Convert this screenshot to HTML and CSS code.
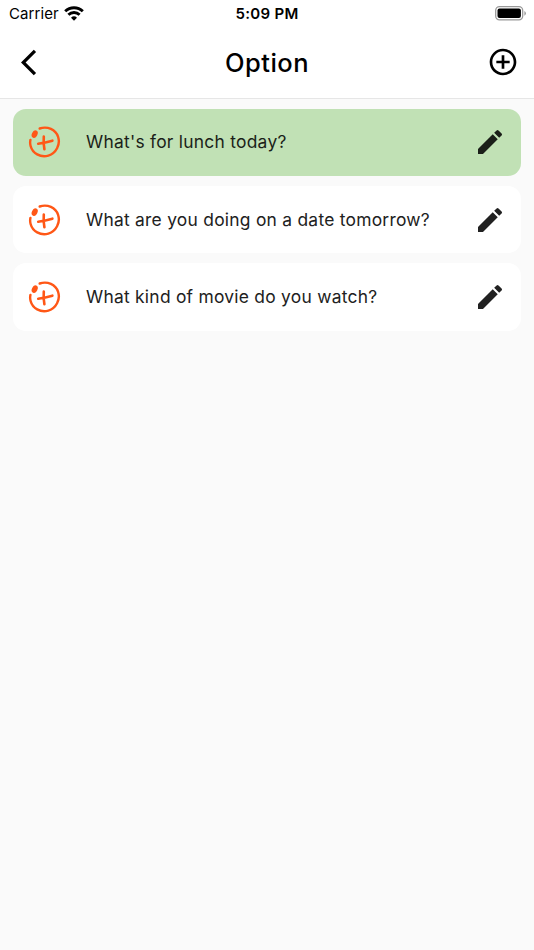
FILE: index.html
```html
<!DOCTYPE html>
<html lang="en">
<head>
<meta charset="utf-8">
<title>Option</title>
<link rel="stylesheet" href="styles.css">
</head>
<body>
<svg class="defs" aria-hidden="true">
  <symbol id="option-mark" viewBox="0 0 34 34">
    <g fill="none" stroke="currentColor" stroke-linecap="round">
      <path d="M12.7 3.5C20.5 .8 28.6 4.6 31.1 11.8C33.7 19.6 29 28.4 21.4 30.6C13.4 32.8 5.5 28.3 3.6 21C3 18.8 3 16.9 3.4 15" stroke-width="2.4"/>
      <path d="M16.8 11.6Q16.2 17.8 17.4 24.3M11.2 18.8Q18.4 17.8 25.4 15.7" stroke-width="2.6"/>
    </g>
    <ellipse cx="7.7" cy="9.1" rx="2.8" ry="3.9" transform="rotate(25 7.7 9.1)" fill="currentColor"/>
  </symbol>
  <symbol id="pencil" viewBox="0 0 24 24">
    <path d="M3 17.25V21h3.75L17.81 9.94l-3.75-3.75L3 17.25zM20.71 7.04a1 1 0 0 0 0-1.41l-2.34-2.34a1 1 0 0 0-1.41 0l-1.83 1.83 3.75 3.75 1.83-1.83z" fill="currentColor"/>
  </symbol>
</svg>
<header class="header">
  <div class="status">
    <div class="status-left">
      <span class="carrier">Carrier</span>
      <svg class="wifi" viewBox="0 0 20 15">
        <g fill="none" stroke="#000" stroke-width="2.9">
          <path d="M1.2 5.3A12.6 12.6 0 0 1 18.8 5.3"/>
          <path d="M4.4 8.8A8 8 0 0 1 15.6 8.8"/>
        </g>
        <path d="M10 14.8L7 11.8A4.3 4.3 0 0 1 13 11.8Z"/>
      </svg>
    </div>
    <span class="time">5:09 PM</span>
    <svg class="battery" viewBox="0 0 32 15">
      <rect x=".7" y=".7" width="27" height="13.2" rx="3.8" fill="none" stroke="#999" stroke-width="1.3"/>
      <rect x="2.5" y="2.5" width="23.4" height="9.6" rx="2"/>
      <path d="M29.4 5a2.6 2.6 0 0 1 0 4.7z" fill="#999"/>
    </svg>
  </div>
  <nav class="nav">
    <svg class="back" viewBox="0 0 24 24"><path d="M11.67 3.87 9.9 2.1 0 12l9.9 9.9 1.77-1.77L3.54 12z"/></svg>
    <h1 class="title">Option</h1>
    <svg class="add" viewBox="0 0 24 24"><path d="M13 7h-2v4H7v2h4v4h2v-4h4v-2h-4V7zm-1-5C6.48 2 2 6.48 2 12s4.48 10 10 10 10-4.48 10-10S17.52 2 12 2zm0 18c-4.41 0-8-3.59-8-8s3.59-8 8-8 8 3.59 8 8-3.59 8-8 8z"/></svg>
  </nav>
</header>
<main class="list">
  <div class="card selected">
    <svg class="mark"><use href="#option-mark"/></svg>
    <span class="label">What's for lunch today?</span>
    <svg class="edit"><use href="#pencil"/></svg>
  </div>
  <div class="card">
    <svg class="mark"><use href="#option-mark"/></svg>
    <span class="label">What are you doing on a date tomorrow?</span>
    <svg class="edit"><use href="#pencil"/></svg>
  </div>
  <div class="card">
    <svg class="mark"><use href="#option-mark"/></svg>
    <span class="label">What kind of movie do you watch?</span>
    <svg class="edit"><use href="#pencil"/></svg>
  </div>
</main>
</body>
</html>
```
FILE: styles.css
```css
* { box-sizing: border-box; }
body {
  margin: 0;
  min-height: 950px;
  background: #fafafa;
  color: #000;
  font-family: Inter, "Liberation Sans", sans-serif;
}
svg { display: block; flex: none; }
.defs { display: none; }
.header {
  height: 99px;
  background: #fff;
  border-bottom: 1px solid #e6e6e6;
}
.status {
  display: grid;
  grid-template-columns: 1fr auto 1fr;
  align-items: center;
  height: 26px;
  padding: 1px 7px 0 9px;
  font-size: 15px;
  line-height: 26px;
}
.status-left { display: flex; align-items: center; gap: 5px; }
.carrier { letter-spacing: 0.1px; }
.wifi { width: 20px; height: 15px; margin-bottom: 2px; }
.time { margin-left: -2px; font-weight: 600; letter-spacing: 0.3px; }
.battery { width: 32px; height: 15px; margin-bottom: 1px; justify-self: end; }
.nav {
  display: grid;
  grid-template-columns: 32px 1fr 32px;
  align-items: center;
  height: 72px;
  padding: 0 15px 0 21px;
}
.back { width: 31px; height: 31px; }
.add { width: 32px; height: 32px; }
.title {
  margin: 0 0 0 -6px;
  padding-top: 1px;
  text-align: center;
  font-size: 25.5px;
  font-weight: 450;
  line-height: 36px;
  letter-spacing: 0.5px;
}
.list {
  display: flex;
  flex-direction: column;
  gap: 10.3px;
  padding: 9.5px 13px;
}
.card {
  display: flex;
  align-items: center;
  height: 67.2px;
  padding: 0 15px 0 14px;
  border-radius: 13px;
  background: #fff;
  color: #212121;
}
.selected { background: #c1e1b5; color: #1b1f19; }
.mark { width: 34px; height: 34px; color: #ff5716; }
.label {
  flex: 1;
  margin-left: 25px;
  font-size: 17.4px;
  line-height: 24px;
  letter-spacing: 0.26px;
  white-space: nowrap;
}
.edit { width: 32px; height: 32px; }
```
